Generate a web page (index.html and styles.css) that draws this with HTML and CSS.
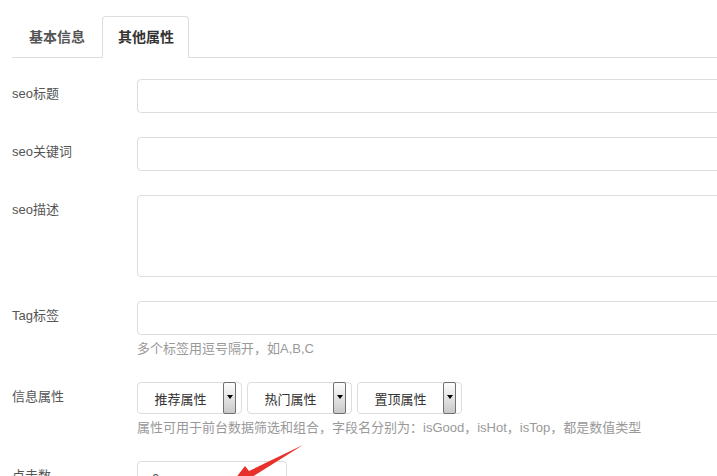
FILE: index.html
```html
<!DOCTYPE html>
<html lang="zh-CN">
<head>
    <meta charset="UTF-8">
    <title>其他属性</title>
    <link rel="stylesheet" href="styles.css">
</head>
<body>
    <ul class="tabs">
        <li class="tab first"><a>基本信息</a></li>
        <li class="tab active"><a>其他属性</a></li>
    </ul>

    <div class="form">
        <div class="row">
            <label class="label">seo标题</label>
            <div class="field"><input class="input" type="text"></div>
        </div>
        <div class="row">
            <label class="label">seo关键词</label>
            <div class="field"><input class="input" type="text"></div>
        </div>
        <div class="row">
            <label class="label">seo描述</label>
            <div class="field"><textarea class="input area"></textarea></div>
        </div>
        <div class="row">
            <label class="label">Tag标签</label>
            <div class="field">
                <input class="input" type="text">
                <p class="help">多个标签用逗号隔开，如A,B,C</p>
            </div>
        </div>
        <div class="row">
            <label class="label">信息属性</label>
            <div class="field">
                <div class="selects">
                    <span class="select"><span class="select-text">推荐属性</span><span class="select-btn"></span></span>
                    <span class="select"><span class="select-text">热门属性</span><span class="select-btn"></span></span>
                    <span class="select"><span class="select-text">置顶属性</span><span class="select-btn"></span></span>
                </div>
                <p class="help">属性可用于前台数据筛选和组合，字段名分别为：isGood，isHot，isTop，都是数值类型</p>
            </div>
        </div>
        <div class="row">
            <label class="label">点击数</label>
            <div class="field"><input class="input small" type="text" value="0"></div>
        </div>
    </div>

    <!-- annotation arrow over the screenshot -->
    <svg class="arrow" width="717" height="476" viewBox="0 0 717 476">
        <polygon points="303,445 252,477 255,482 228,488 245,466 249,471" fill="#e8312b"/>
    </svg>
</body>
</html>
```

FILE: styles.css
```css
* {
    margin: 0;
    padding: 0;
    box-sizing: border-box;
}

html, body {
    overflow: hidden;
}

body {
    font-family: "Liberation Sans", "Noto Sans CJK SC", sans-serif;
    font-size: 13px;
    color: #555;
    background: #fff;
    width: 717px;
    height: 476px;
    position: relative;
}

.tabs {
    list-style: none;
    display: flex;
    margin: 16px 0 0 12px;
    border-bottom: 1px solid #ddd;
}

.tab {
    margin-bottom: -1px;
    margin-right: 2px;
}

.tab.first {
    margin-left: 1px;
}

.tab a {
    display: block;
    padding: 10px 14px 10px 15px;
    font-size: 14px;
    line-height: 20px;
    font-weight: bold;
    color: #555;
    border: 1px solid transparent;
    border-radius: 4px 4px 0 0;
}

.tab.active a {
    color: #333;
    background: #fff;
    border-color: #ddd;
    border-bottom-color: transparent;
}

.form {
    padding: 21px 0 0 12px;
}

.row {
    display: flex;
    margin-bottom: 24px;
}

.label {
    width: 125px;
    flex-shrink: 0;
    padding-top: 5px;
    line-height: 20px;
    color: #555;
}

.field {
    flex: 1;
}

.input {
    display: block;
    width: 620px;
    height: 34px;
    padding: 6px 12px;
    font-family: inherit;
    font-size: 13px;
    color: #555;
    border: 1px solid #ddd;
    border-radius: 4px;
    outline: none;
    background: #fff;
}

.input.area {
    height: 82px;
    resize: none;
}

.input.small {
    width: 150px;
    padding-left: 14px;
}

.help {
    margin-top: 5px;
    line-height: 18px;
    color: #999;
}

.selects {
    display: flex;
    gap: 5px;
}

.select {
    display: flex;
    align-items: stretch;
    width: 105px;
    height: 32px;
    border: 1px solid #ddd;
    border-radius: 4px;
    background: #fff;
}

.select-text {
    flex: 1;
    display: flex;
    align-items: center;
    justify-content: center;
    color: #333;
}

.select-btn {
    width: 13px;
    margin: -1px 5px -1px 0;
    border: 1px solid #707070;
    border-radius: 2px;
    background: linear-gradient(#fdfdfd, #c9c9c9);
    display: flex;
    align-items: center;
    justify-content: center;
}

.select-btn::after {
    content: "";
    border-left: 3px solid transparent;
    border-right: 3px solid transparent;
    border-top: 4px solid #000;
    margin-bottom: 2px;
}

.arrow {
    position: absolute;
    left: 0;
    top: 0;
    pointer-events: none;
}
```
